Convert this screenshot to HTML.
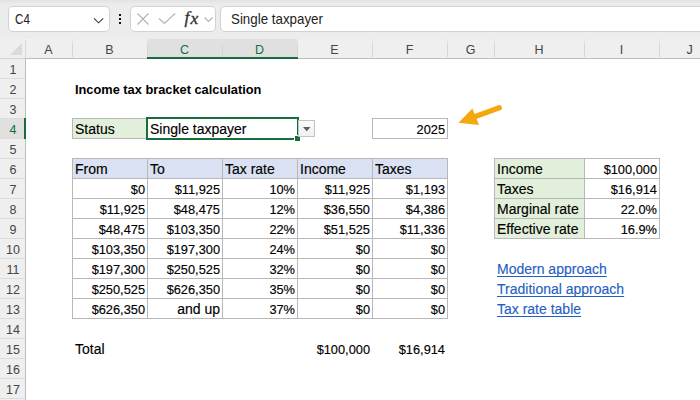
<!DOCTYPE html><html><head><meta charset="utf-8"><style>
html,body{margin:0;padding:0;width:700px;height:400px;overflow:hidden;background:#fff;position:relative}
.t{position:absolute;font-family:"Liberation Sans", sans-serif;line-height:19px;height:19px;white-space:nowrap;-webkit-text-stroke:0.15px currentColor}
.u{position:absolute;font-family:"Liberation Sans", sans-serif;line-height:18px;white-space:nowrap}
.h{position:absolute;font-family:"Liberation Sans", sans-serif;font-size:12.5px;line-height:19px;height:19px;text-align:center;white-space:nowrap}
</style></head><body><div style="position:absolute;left:0;top:0;width:700px;height:39px;background:linear-gradient(#e3e3e3 0px,#ebebeb 4px,#ececec 8px)"></div><div style="position:absolute;left:8px;top:6px;width:100px;height:24px;border:1px solid #d2d2d2;border-radius:5px;background:#fff"></div><div class="u" style="left:15px;top:10px;font-size:14.5px;color:#222;transform:scaleX(0.8);transform-origin:0 0">C4</div><svg style="position:absolute;left:0;top:0" width="700" height="40"><polyline points="94,18.3 98.6,22.8 103.2,18.3" fill="none" stroke="#3a3a3a" stroke-width="1.1"/><rect x="119" y="14" width="2" height="2" fill="#111"/><rect x="119" y="18" width="2" height="2" fill="#111"/><rect x="119" y="22" width="2" height="2" fill="#111"/></svg><div style="position:absolute;left:130px;top:6px;width:84px;height:24px;border:1px solid #d2d2d2;border-radius:5px;background:#fff"></div><svg style="position:absolute;left:0;top:0" width="700" height="40"><path d="M137.5,13.5 L148.5,24.5 M148.5,13.5 L137.5,24.5" stroke="#b4b4b4" stroke-width="1.2" fill="none"/><polyline points="159,18.5 164.5,23.5 175,13.5" fill="none" stroke="#b4b4b4" stroke-width="1.2"/><polyline points="204.5,17.5 208.5,21.5 212.5,17.5" fill="none" stroke="#b0b0b0" stroke-width="1.1"/></svg><svg style="position:absolute;left:0;top:0" width="700" height="40"><text x="184.5" y="23" font-family="Liberation Serif" font-style="italic" font-size="17.5" fill="#333" stroke="#333" stroke-width="0.35">f</text><text x="190.5" y="24.3" font-family="Liberation Serif" font-style="italic" font-size="17.5" fill="#333" stroke="#333" stroke-width="0.35">x</text></svg><div style="position:absolute;left:220px;top:6px;width:500px;height:24px;border:1px solid #d2d2d2;border-radius:5px;background:#fff"></div><div class="u" style="left:231px;top:10px;font-size:14.5px;color:#222;transform:scaleX(0.92);transform-origin:0 0">Single taxpayer</div><div style="position:absolute;left:0px;top:39px;width:700px;height:19px;background:#efefef;"></div><svg style="position:absolute;left:0;top:0" width="30" height="60"><polygon points="22,43 22,55 10,55" fill="#dadada"/></svg><div style="position:absolute;left:148px;top:39px;width:149px;height:18px;background:#e0e0e0;"></div><div style="position:absolute;left:72px;top:39px;width:1px;height:18px;background:linear-gradient(#efefef,#d6d6d6 6px,#d6d6d6);"></div><div style="position:absolute;left:147px;top:39px;width:1px;height:18px;background:linear-gradient(#efefef,#d6d6d6 6px,#d6d6d6);"></div><div style="position:absolute;left:222px;top:39px;width:1px;height:18px;background:linear-gradient(#efefef,#d6d6d6 6px,#d6d6d6);"></div><div style="position:absolute;left:297px;top:39px;width:1px;height:18px;background:linear-gradient(#efefef,#d6d6d6 6px,#d6d6d6);"></div><div style="position:absolute;left:372px;top:39px;width:1px;height:18px;background:linear-gradient(#efefef,#d6d6d6 6px,#d6d6d6);"></div><div style="position:absolute;left:447px;top:39px;width:1px;height:18px;background:linear-gradient(#efefef,#d6d6d6 6px,#d6d6d6);"></div><div style="position:absolute;left:494px;top:39px;width:1px;height:18px;background:linear-gradient(#efefef,#d6d6d6 6px,#d6d6d6);"></div><div style="position:absolute;left:584px;top:39px;width:1px;height:18px;background:linear-gradient(#efefef,#d6d6d6 6px,#d6d6d6);"></div><div style="position:absolute;left:659px;top:39px;width:1px;height:18px;background:linear-gradient(#efefef,#d6d6d6 6px,#d6d6d6);"></div><div style="position:absolute;left:26px;top:58px;width:675px;height:1px;background:#bdbdbd;"></div><div style="position:absolute;left:0px;top:58px;width:26px;height:1px;background:#d2d2d2;"></div><div style="position:absolute;left:147px;top:57px;width:151px;height:2px;background:#176e3c;"></div><div class="h" style="left:25px;width:47px;top:41px;color:#444">A</div><div class="h" style="left:72px;width:75px;top:41px;color:#444">B</div><div class="h" style="left:147px;width:75px;top:41px;color:#176e3c">C</div><div class="h" style="left:222px;width:75px;top:41px;color:#176e3c">D</div><div class="h" style="left:297px;width:75px;top:41px;color:#444">E</div><div class="h" style="left:372px;width:75px;top:41px;color:#444">F</div><div class="h" style="left:447px;width:47px;top:41px;color:#444">G</div><div class="h" style="left:494px;width:90px;top:41px;color:#444">H</div><div class="h" style="left:584px;width:75px;top:41px;color:#444">I</div><div class="h" style="left:659px;width:61px;top:41px;color:#444">J</div><div style="position:absolute;left:0px;top:59px;width:25px;height:341px;background:#efefef;"></div><div style="position:absolute;left:0px;top:119px;width:24px;height:19px;background:#e0e0e0;"></div><div style="position:absolute;left:0px;top:78px;width:25px;height:1px;background:#dcdcdc;"></div><div style="position:absolute;left:0px;top:98px;width:25px;height:1px;background:#dcdcdc;"></div><div style="position:absolute;left:0px;top:118px;width:25px;height:1px;background:#dcdcdc;"></div><div style="position:absolute;left:0px;top:138px;width:25px;height:1px;background:#dcdcdc;"></div><div style="position:absolute;left:0px;top:158px;width:25px;height:1px;background:#dcdcdc;"></div><div style="position:absolute;left:0px;top:178px;width:25px;height:1px;background:#dcdcdc;"></div><div style="position:absolute;left:0px;top:198px;width:25px;height:1px;background:#dcdcdc;"></div><div style="position:absolute;left:0px;top:218px;width:25px;height:1px;background:#dcdcdc;"></div><div style="position:absolute;left:0px;top:238px;width:25px;height:1px;background:#dcdcdc;"></div><div style="position:absolute;left:0px;top:258px;width:25px;height:1px;background:#dcdcdc;"></div><div style="position:absolute;left:0px;top:278px;width:25px;height:1px;background:#dcdcdc;"></div><div style="position:absolute;left:0px;top:298px;width:25px;height:1px;background:#dcdcdc;"></div><div style="position:absolute;left:0px;top:318px;width:25px;height:1px;background:#dcdcdc;"></div><div style="position:absolute;left:0px;top:338px;width:25px;height:1px;background:#dcdcdc;"></div><div style="position:absolute;left:0px;top:358px;width:25px;height:1px;background:#dcdcdc;"></div><div style="position:absolute;left:0px;top:378px;width:25px;height:1px;background:#dcdcdc;"></div><div style="position:absolute;left:0px;top:398px;width:25px;height:1px;background:#dcdcdc;"></div><div style="position:absolute;left:25px;top:40px;width:1px;height:18px;background:#d8d8d8;"></div><div style="position:absolute;left:25px;top:58px;width:1px;height:343px;background:#bdbdbd;"></div><div style="position:absolute;left:25px;top:39px;width:1px;height:1px;background:#fafafa;"></div><div style="position:absolute;left:24px;top:118px;width:2px;height:21px;background:#176e3c;"></div><div class="h" style="left:0.5px;width:25px;top:61px;color:#444">1</div><div class="h" style="left:0.5px;width:25px;top:81px;color:#444">2</div><div class="h" style="left:0.5px;width:25px;top:101px;color:#444">3</div><div class="h" style="left:0.5px;width:25px;top:121px;color:#176e3c">4</div><div class="h" style="left:0.5px;width:25px;top:141px;color:#444">5</div><div class="h" style="left:0.5px;width:25px;top:161px;color:#444">6</div><div class="h" style="left:0.5px;width:25px;top:181px;color:#444">7</div><div class="h" style="left:0.5px;width:25px;top:201px;color:#444">8</div><div class="h" style="left:0.5px;width:25px;top:221px;color:#444">9</div><div class="h" style="left:0.5px;width:25px;top:241px;color:#444">10</div><div class="h" style="left:0.5px;width:25px;top:261px;color:#444">11</div><div class="h" style="left:0.5px;width:25px;top:281px;color:#444">12</div><div class="h" style="left:0.5px;width:25px;top:301px;color:#444">13</div><div class="h" style="left:0.5px;width:25px;top:321px;color:#444">14</div><div class="h" style="left:0.5px;width:25px;top:341px;color:#444">15</div><div class="h" style="left:0.5px;width:25px;top:361px;color:#444">16</div><div class="h" style="left:0.5px;width:25px;top:381px;color:#444">17</div><div style="position:absolute;left:26px;top:59px;width:674px;height:341px;background:#fff;"></div><div class="t" style="left:75px;top:80px;font-size:12.8px;font-weight:700;color:#000;-webkit-text-stroke:0">Income tax bracket calculation</div><div style="position:absolute;left:73px;top:119px;width:74px;height:19px;background:#e2efda;"></div><div class="t" style="left:75px;top:120px;font-size:14px;font-weight:400;color:#000;">Status</div><div style="position:absolute;left:72px;top:118px;width:76px;height:1px;background:#b8b8b8;"></div><div style="position:absolute;left:72px;top:138px;width:76px;height:1px;background:#b8b8b8;"></div><div style="position:absolute;left:72px;top:118px;width:1px;height:21px;background:#b8b8b8;"></div><div style="position:absolute;left:147px;top:118px;width:1px;height:21px;background:#b8b8b8;"></div><div class="t" style="left:150px;top:120px;font-size:14px;font-weight:400;color:#000;">Single taxpayer</div><div class="t" style="right:255px;top:120px;font-size:12.8px;font-weight:400;color:#000;text-align:right;">2025</div><div style="position:absolute;left:372px;top:118px;width:76px;height:1px;background:#b8b8b8;"></div><div style="position:absolute;left:372px;top:138px;width:76px;height:1px;background:#b8b8b8;"></div><div style="position:absolute;left:372px;top:118px;width:1px;height:21px;background:#b8b8b8;"></div><div style="position:absolute;left:447px;top:118px;width:1px;height:21px;background:#b8b8b8;"></div><div style="position:absolute;left:73px;top:159px;width:74px;height:19px;background:#d9e1f2;"></div><div class="t" style="left:75px;top:160px;font-size:14px;font-weight:400;color:#000;">From</div><div style="position:absolute;left:148px;top:159px;width:74px;height:19px;background:#d9e1f2;"></div><div class="t" style="left:150px;top:160px;font-size:14px;font-weight:400;color:#000;">To</div><div style="position:absolute;left:223px;top:159px;width:74px;height:19px;background:#d9e1f2;"></div><div class="t" style="left:225px;top:160px;font-size:14px;font-weight:400;color:#000;">Tax rate</div><div style="position:absolute;left:298px;top:159px;width:74px;height:19px;background:#d9e1f2;"></div><div class="t" style="left:300px;top:160px;font-size:14px;font-weight:400;color:#000;">Income</div><div style="position:absolute;left:373px;top:159px;width:74px;height:19px;background:#d9e1f2;"></div><div class="t" style="left:375px;top:160px;font-size:14px;font-weight:400;color:#000;">Taxes</div><div class="t" style="right:555px;top:180px;font-size:12.8px;font-weight:400;color:#000;text-align:right;">$0</div><div class="t" style="right:480px;top:180px;font-size:12.8px;font-weight:400;color:#000;text-align:right;">$11,925</div><div class="t" style="right:405px;top:180px;font-size:12.8px;font-weight:400;color:#000;text-align:right;">10%</div><div class="t" style="right:330px;top:180px;font-size:12.8px;font-weight:400;color:#000;text-align:right;">$11,925</div><div class="t" style="right:255px;top:180px;font-size:12.8px;font-weight:400;color:#000;text-align:right;">$1,193</div><div class="t" style="right:555px;top:200px;font-size:12.8px;font-weight:400;color:#000;text-align:right;">$11,925</div><div class="t" style="right:480px;top:200px;font-size:12.8px;font-weight:400;color:#000;text-align:right;">$48,475</div><div class="t" style="right:405px;top:200px;font-size:12.8px;font-weight:400;color:#000;text-align:right;">12%</div><div class="t" style="right:330px;top:200px;font-size:12.8px;font-weight:400;color:#000;text-align:right;">$36,550</div><div class="t" style="right:255px;top:200px;font-size:12.8px;font-weight:400;color:#000;text-align:right;">$4,386</div><div class="t" style="right:555px;top:220px;font-size:12.8px;font-weight:400;color:#000;text-align:right;">$48,475</div><div class="t" style="right:480px;top:220px;font-size:12.8px;font-weight:400;color:#000;text-align:right;">$103,350</div><div class="t" style="right:405px;top:220px;font-size:12.8px;font-weight:400;color:#000;text-align:right;">22%</div><div class="t" style="right:330px;top:220px;font-size:12.8px;font-weight:400;color:#000;text-align:right;">$51,525</div><div class="t" style="right:255px;top:220px;font-size:12.8px;font-weight:400;color:#000;text-align:right;">$11,336</div><div class="t" style="right:555px;top:240px;font-size:12.8px;font-weight:400;color:#000;text-align:right;">$103,350</div><div class="t" style="right:480px;top:240px;font-size:12.8px;font-weight:400;color:#000;text-align:right;">$197,300</div><div class="t" style="right:405px;top:240px;font-size:12.8px;font-weight:400;color:#000;text-align:right;">24%</div><div class="t" style="right:330px;top:240px;font-size:12.8px;font-weight:400;color:#000;text-align:right;">$0</div><div class="t" style="right:255px;top:240px;font-size:12.8px;font-weight:400;color:#000;text-align:right;">$0</div><div class="t" style="right:555px;top:260px;font-size:12.8px;font-weight:400;color:#000;text-align:right;">$197,300</div><div class="t" style="right:480px;top:260px;font-size:12.8px;font-weight:400;color:#000;text-align:right;">$250,525</div><div class="t" style="right:405px;top:260px;font-size:12.8px;font-weight:400;color:#000;text-align:right;">32%</div><div class="t" style="right:330px;top:260px;font-size:12.8px;font-weight:400;color:#000;text-align:right;">$0</div><div class="t" style="right:255px;top:260px;font-size:12.8px;font-weight:400;color:#000;text-align:right;">$0</div><div class="t" style="right:555px;top:280px;font-size:12.8px;font-weight:400;color:#000;text-align:right;">$250,525</div><div class="t" style="right:480px;top:280px;font-size:12.8px;font-weight:400;color:#000;text-align:right;">$626,350</div><div class="t" style="right:405px;top:280px;font-size:12.8px;font-weight:400;color:#000;text-align:right;">35%</div><div class="t" style="right:330px;top:280px;font-size:12.8px;font-weight:400;color:#000;text-align:right;">$0</div><div class="t" style="right:255px;top:280px;font-size:12.8px;font-weight:400;color:#000;text-align:right;">$0</div><div class="t" style="right:555px;top:300px;font-size:12.8px;font-weight:400;color:#000;text-align:right;">$626,350</div><div class="t" style="right:480px;top:300px;font-size:14px;font-weight:400;color:#000;text-align:right;">and up</div><div class="t" style="right:405px;top:300px;font-size:12.8px;font-weight:400;color:#000;text-align:right;">37%</div><div class="t" style="right:330px;top:300px;font-size:12.8px;font-weight:400;color:#000;text-align:right;">$0</div><div class="t" style="right:255px;top:300px;font-size:12.8px;font-weight:400;color:#000;text-align:right;">$0</div><div style="position:absolute;left:72px;top:158px;width:376px;height:1px;background:#b8b8b8;"></div><div style="position:absolute;left:72px;top:178px;width:376px;height:1px;background:#b8b8b8;"></div><div style="position:absolute;left:72px;top:198px;width:376px;height:1px;background:#b8b8b8;"></div><div style="position:absolute;left:72px;top:218px;width:376px;height:1px;background:#b8b8b8;"></div><div style="position:absolute;left:72px;top:238px;width:376px;height:1px;background:#b8b8b8;"></div><div style="position:absolute;left:72px;top:258px;width:376px;height:1px;background:#b8b8b8;"></div><div style="position:absolute;left:72px;top:278px;width:376px;height:1px;background:#b8b8b8;"></div><div style="position:absolute;left:72px;top:298px;width:376px;height:1px;background:#b8b8b8;"></div><div style="position:absolute;left:72px;top:318px;width:376px;height:1px;background:#b8b8b8;"></div><div style="position:absolute;left:72px;top:158px;width:1px;height:161px;background:#b8b8b8;"></div><div style="position:absolute;left:147px;top:158px;width:1px;height:161px;background:#b8b8b8;"></div><div style="position:absolute;left:222px;top:158px;width:1px;height:161px;background:#b8b8b8;"></div><div style="position:absolute;left:297px;top:158px;width:1px;height:161px;background:#b8b8b8;"></div><div style="position:absolute;left:372px;top:158px;width:1px;height:161px;background:#b8b8b8;"></div><div style="position:absolute;left:447px;top:158px;width:1px;height:161px;background:#b8b8b8;"></div><div class="t" style="left:75px;top:340px;font-size:14px;font-weight:400;color:#000;">Total</div><div class="t" style="right:330px;top:340px;font-size:12.8px;font-weight:400;color:#000;text-align:right;">$100,000</div><div class="t" style="right:255px;top:340px;font-size:12.8px;font-weight:400;color:#000;text-align:right;">$16,914</div><div style="position:absolute;left:495px;top:159px;width:89px;height:19px;background:#e2efda;"></div><div class="t" style="left:497px;top:160px;font-size:14px;font-weight:400;color:#000;">Income</div><div class="t" style="right:43px;top:160px;font-size:12.8px;font-weight:400;color:#000;text-align:right;">$100,000</div><div style="position:absolute;left:495px;top:179px;width:89px;height:19px;background:#e2efda;"></div><div class="t" style="left:497px;top:180px;font-size:14px;font-weight:400;color:#000;">Taxes</div><div class="t" style="right:43px;top:180px;font-size:12.8px;font-weight:400;color:#000;text-align:right;">$16,914</div><div style="position:absolute;left:495px;top:199px;width:89px;height:19px;background:#e2efda;"></div><div class="t" style="left:497px;top:200px;font-size:14px;font-weight:400;color:#000;">Marginal rate</div><div class="t" style="right:43px;top:200px;font-size:12.8px;font-weight:400;color:#000;text-align:right;">22.0%</div><div style="position:absolute;left:495px;top:219px;width:89px;height:19px;background:#e2efda;"></div><div class="t" style="left:497px;top:220px;font-size:14px;font-weight:400;color:#000;">Effective rate</div><div class="t" style="right:43px;top:220px;font-size:12.8px;font-weight:400;color:#000;text-align:right;">16.9%</div><div style="position:absolute;left:494px;top:158px;width:166px;height:1px;background:#b8b8b8;"></div><div style="position:absolute;left:494px;top:178px;width:166px;height:1px;background:#b8b8b8;"></div><div style="position:absolute;left:494px;top:198px;width:166px;height:1px;background:#b8b8b8;"></div><div style="position:absolute;left:494px;top:218px;width:166px;height:1px;background:#b8b8b8;"></div><div style="position:absolute;left:494px;top:238px;width:166px;height:1px;background:#b8b8b8;"></div><div style="position:absolute;left:494px;top:158px;width:1px;height:81px;background:#b8b8b8;"></div><div style="position:absolute;left:584px;top:158px;width:1px;height:81px;background:#b8b8b8;"></div><div style="position:absolute;left:659px;top:158px;width:1px;height:81px;background:#b8b8b8;"></div><div class="t" style="left:497px;top:260px;font-size:14px;font-weight:400;color:#1f5fc4;text-decoration:underline;text-decoration-thickness:1px;text-underline-offset:2px;text-decoration-skip-ink:none">Modern approach</div><div class="t" style="left:497px;top:280px;font-size:14px;font-weight:400;color:#1f5fc4;text-decoration:underline;text-decoration-thickness:1px;text-underline-offset:2px;text-decoration-skip-ink:none">Traditional approach</div><div class="t" style="left:497px;top:300px;font-size:14px;font-weight:400;color:#1f5fc4;text-decoration:underline;text-decoration-thickness:1px;text-underline-offset:2px;text-decoration-skip-ink:none">Tax rate table</div><div style="position:absolute;left:146px;top:117px;width:149px;height:19px;border:2px solid #176e3c"></div><div style="position:absolute;left:295px;top:136px;width:5px;height:5px;background:#176e3c;box-shadow:0 0 0 1px #fff"></div><div style="position:absolute;left:298px;top:120px;width:15px;height:15px;border:1px solid #c3c3c3;background:linear-gradient(#fbfbfb,#eef0f3)"></div><svg style="position:absolute;left:0;top:0" width="700" height="400"><polygon points="303,127 310.5,127 306.75,131.2" fill="#5e5e5e"/><path d="M499.3,107.8 L474,117" stroke="#f5a70f" stroke-width="5.2" stroke-linecap="round" fill="none"/><polygon points="458.5,122.8 472.4,108.5 479,125" fill="#f5a70f"/></svg></body></html>
